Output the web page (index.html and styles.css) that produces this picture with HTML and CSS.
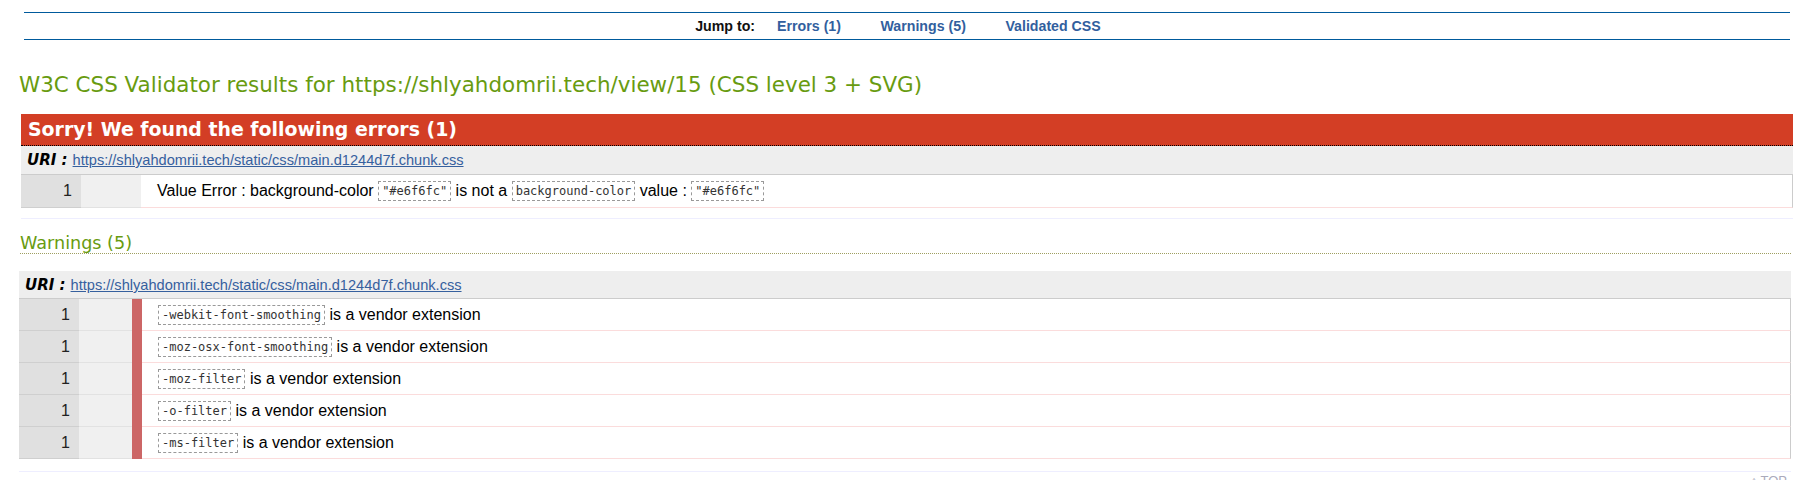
FILE: index.html
```html
<!DOCTYPE html>
<html>
<head>
<meta charset="utf-8">
<link rel="stylesheet" href="styles.css">
</head>
<body>
<div class="nav">
  <span class="jump">Jump to:</span>
  <a class="navlink" href="#errors">Errors (1)</a>
  <a class="navlink" href="#warnings">Warnings (5)</a>
  <a class="navlink last" href="#css">Validated CSS</a>
</div>

<h2 class="title">W3C CSS Validator results for https://shlyahdomrii.tech/view/15 (CSS level 3 + SVG)</h2>

<div class="errors">
  <div class="err-head">Sorry! We found the following errors (1)</div>
  <div class="uri"><span class="uri-label">URI :</span> <a class="uri-link" href="#">https://shlyahdomrii.tech/static/css/main.d1244d7f.chunk.css</a></div>
  <div class="table err-table">
    <div class="row">
      <div class="num">1</div>
      <div class="blank"></div>
      <div class="msg">Value Error : background-color <span class="code">"#e6f6fc"</span> is not a <span class="code">background-color</span> value : <span class="code">"#e6f6fc"</span></div>
    </div>
  </div>
  <div class="sep"></div>
</div>

<div class="warnings">
  <h3 class="warn-head">Warnings (5)</h3>
  <div class="uri"><span class="uri-label">URI :</span> <a class="uri-link" href="#">https://shlyahdomrii.tech/static/css/main.d1244d7f.chunk.css</a></div>
  <div class="table warn-table">
    <div class="row">
      <div class="num">1</div><div class="blank"></div><div class="bar"></div>
      <div class="msg"><span class="code">-webkit-font-smoothing</span> is a vendor extension</div>
    </div>
    <div class="row">
      <div class="num">1</div><div class="blank"></div><div class="bar"></div>
      <div class="msg"><span class="code">-moz-osx-font-smoothing</span> is a vendor extension</div>
    </div>
    <div class="row">
      <div class="num">1</div><div class="blank"></div><div class="bar"></div>
      <div class="msg"><span class="code">-moz-filter</span> is a vendor extension</div>
    </div>
    <div class="row">
      <div class="num">1</div><div class="blank"></div><div class="bar"></div>
      <div class="msg"><span class="code">-o-filter</span> is a vendor extension</div>
    </div>
    <div class="row">
      <div class="num">1</div><div class="blank"></div><div class="bar"></div>
      <div class="msg"><span class="code">-ms-filter</span> is a vendor extension</div>
    </div>
  </div>
  <div class="sep"></div>
  <div class="top">↑ TOP</div>
</div>
</body>
</html>
```

FILE: styles.css
```css
html, body {
  margin: 0;
  padding: 0;
  background: #fff;
}
body {
  font-family: "Liberation Sans", Arial, sans-serif;
  font-size: 16px;
  color: #000;
}
.nav {
  margin: 12px 26px 0 24px;
  border-top: 1px solid #005a9c;
  border-bottom: 1px solid #005a9c;
  height: 26px;
  display: flex;
  align-items: center;
  justify-content: center;
  padding-right: 18px;
  font-size: 14.2px;
  font-weight: bold;
}
.jump {
  color: #111;
  margin-right: 22px;
}
.navlink {
  color: #325f9e;
  text-decoration: none;
  margin-right: 39.5px;
}
.navlink.last {
  margin-right: 0;
}
.title {
  margin: 32px 0 0 19px;
  font-family: "DejaVu Sans", Verdana, sans-serif;
  font-size: 21.45px;
  line-height: 25px;
  font-weight: normal;
  color: #689b10;
}
.errors {
  margin: 17px 23px 0 21px;
}
.err-head {
  height: 31px;
  line-height: 31px;
  background: #d33e25;
  color: #fff;
  font-family: "DejaVu Sans", Verdana, sans-serif;
  font-weight: bold;
  font-size: 18.9px;
  padding-left: 7px;
  border-bottom: 1px dotted #000;
}
.uri {
  height: 28px;
  line-height: 28px;
  background: #eee;
  padding-left: 6px;
  display: flex;
  align-items: center;
  gap: 5px;
}
.uri-label {
  font-family: "DejaVu Sans", Verdana, sans-serif;
  font-weight: bold;
  font-style: italic;
  font-size: 15px;
}
.uri-link {
  color: #36609e;
  font-size: 14.6px;
  text-decoration: underline;
}
.table {
  border-top: 1px solid #ccc;
}
.row {
  display: grid;
  height: 32px;
}
.err-table .row {
  grid-template-columns: 60px 60px 1fr;
  height: 33px;
}
.warn-table .row {
  grid-template-columns: 60px 53px 10px 1fr;
}
.num {
  background: #e0e0e0;
  border-bottom: 1px solid #cfcfcf;
  padding-right: 9px;
  display: flex;
  align-items: center;
  justify-content: flex-end;
  color: #222;
}
.blank {
  background: #f0f0f0;
  border-bottom: 1px solid #e2e2e2;
}
.bar {
  background: #cc6666;
}
.msg {
  display: flex;
  align-items: center;
  padding-left: 16px;
  border-bottom: 1px solid #fbdcdc;
  border-right: 1px solid #ccc;
  white-space: pre;
}
.code {
  font-family: "DejaVu Sans Mono", "Liberation Mono", monospace;
  font-size: 12px;
  line-height: 14px;
  color: #333;
  border: 1px dashed #999;
  padding: 2px 3px;
}
.sep {
  margin-top: 10px;
  border-top: 1px solid #eeeeff;
}
.warnings {
  margin: 0 25px 0 19px;
}
.warn-head {
  margin: 14px 0 0 1px;
  font-family: "DejaVu Sans", Verdana, sans-serif;
  font-size: 17.6px;
  line-height: 20px;
  font-weight: normal;
  color: #689b10;
  border-bottom: 1px dotted #9f9f60;
}
.warnings .uri {
  margin-top: 17px;
}
.warn-table {
  margin-top: -1px;
}
.warnings .sep {
  margin-top: 12px;
}
.top {
  text-align: right;
  padding-right: 4px;
  margin-top: 2px;
  font-size: 13px;
  line-height: 14px;
  color: #aab;
}
```
